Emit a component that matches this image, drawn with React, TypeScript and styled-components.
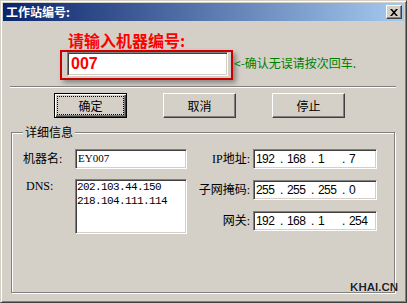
import React from 'react';
import styled, { createGlobalStyle } from 'styled-components';

const GlobalStyle = createGlobalStyle`
  html, body {
    margin: 0;
    padding: 0;
    background: #d4d0c8;
  }
  body {
    font-family: "Noto Sans CJK SC", "Liberation Sans", sans-serif;
    font-size: 12px;
    color: #000;
  }
`;

const Window = styled.div`
  width: 407px;
  height: 303px;
  box-sizing: border-box;
  background: #d4d0c8;
  border: 1px solid;
  border-color: #d4d0c8 #404040 #404040 #d4d0c8;
  box-shadow: inset 1px 1px #fff, inset -1px -1px #808080;
  padding: 2px;
  display: flex;
  flex-direction: column;
`;

const TitleBar = styled.div`
  height: 18px;
  flex: none;
  display: flex;
  align-items: center;
  padding: 0 2px 0 3px;
  background: linear-gradient(to right, #0a246a, #a6caf0);
`;

const Title = styled.span`
  color: #fff;
  font-weight: bold;
  font-size: 12px;
  line-height: 18px;
`;

const CloseButton = styled.div`
  margin-left: auto;
  width: 16px;
  height: 14px;
  box-sizing: border-box;
  background: #d4d0c8;
  border: 1px solid;
  border-color: #fff #404040 #404040 #fff;
  box-shadow: inset -1px -1px #808080;
  display: flex;
  align-items: center;
  justify-content: center;
`;

const Body = styled.div`
  position: relative;
  flex: 1;
  display: flex;
  flex-direction: column;
  align-items: flex-start;
`;

const PromptTitle = styled.div`
  margin: 11px 0 0 65px;
  font-size: 16px;
  line-height: 16px;
  font-weight: bold;
  color: #f00;
`;

const InputRow = styled.div`
  margin: 2px 0 0 57px;
  display: flex;
  align-items: flex-start;
`;

const RedFrame = styled.div`
  width: 173px;
  height: 30px;
  box-sizing: border-box;
  border: 2px solid #c80000;
  padding: 0 3px 0 5px;
  box-shadow: 3px 3px 5px rgba(0, 0, 0, 0.35);
  display: flex;
`;

const Sunken = styled.div<{ $w?: number; $h?: number }>`
  box-sizing: border-box;
  background: #fff;
  border: 1px solid;
  border-color: #808080 #fff #fff #808080;
  box-shadow: inset 1px 1px #404040, inset -1px -1px #d4d0c8;
  width: ${(p) => (p.$w ? `${p.$w}px` : 'auto')};
  height: ${(p) => p.$h ?? 20}px;
  flex: none;
`;

const PrimaryField = styled(Sunken)`
  flex: 1;
  padding-left: 3px;
  font-family: "Liberation Sans", sans-serif;
  font-weight: bold;
  font-size: 16px;
  line-height: 22px;
  color: #f00;
`;

const Hint = styled.div`
  margin: 6px 0 0 1px;
  color: #008000;
  font-size: 12px;
  line-height: 14px;
  white-space: nowrap;
`;

const Separator = styled.div`
  margin: 6px 0 0 7px;
  width: 386px;
  border-top: 1px solid #808080;
  border-bottom: 1px solid #fff;
`;

const ButtonRow = styled.div`
  margin: 5px 0 0 51px;
  display: flex;
  gap: 36px;
`;

const Button = styled.div<{ $default?: boolean }>`
  width: 73px;
  height: 25px;
  box-sizing: border-box;
  background: #d4d0c8;
  display: flex;
  padding: ${(p) => (p.$default ? '2px' : '3px')};
  border: 1px solid;
  border-color: ${(p) => (p.$default ? '#000' : '#fff #404040 #404040 #fff')};
  box-shadow: ${(p) =>
    p.$default
      ? 'inset 1px 1px #fff, inset -1px -1px #404040, inset -2px -2px #808080'
      : 'inset -1px -1px #808080'};
`;

const FocusRing = styled.span<{ $on?: boolean }>`
  flex: 1;
  display: flex;
  align-items: center;
  justify-content: center;
  border: 1px dotted ${(p) => (p.$on ? '#000' : 'transparent')};
  font-size: 12px;
  line-height: 14px;
`;

const GroupBox = styled.div`
  position: relative;
  margin: 14px 0 0 8px;
  width: 384px;
  height: 161px;
  box-sizing: border-box;
  border: 1px solid #808080;
  box-shadow: inset 1px 1px #fff, 1px 1px #fff;
  padding: 16px 0 0 11px;
  display: flex;
  align-items: flex-start;
  gap: 6px;
`;

const Legend = styled.span`
  position: absolute;
  top: -8px;
  left: 11px;
  padding: 0 2px;
  background: #d4d0c8;
  font-size: 12px;
  line-height: 14px;
`;

const Column = styled.div<{ $gap: number }>`
  display: flex;
  flex-direction: column;
  gap: ${(p) => p.$gap}px;
`;

const Row = styled.div<{ $top?: boolean }>`
  display: flex;
  align-items: ${(p) => (p.$top ? 'flex-start' : 'center')};
`;

const Label = styled.span<{ $w: number; $right?: boolean; $pad?: number }>`
  width: ${(p) => p.$w}px;
  box-sizing: border-box;
  padding-left: ${(p) => p.$pad ?? 0}px;
  text-align: ${(p) => (p.$right ? 'right' : 'left')};
  font-family: "Liberation Serif", "Noto Sans CJK SC", serif;
  font-size: 12px;
  line-height: 14px;
  white-space: nowrap;
  flex: none;
`;

const NameField = styled(Sunken)`
  padding-left: 2px;
  font-family: "Liberation Serif", serif;
  font-size: 11px;
  line-height: 17px;
`;

const DnsBox = styled(Sunken)`
  padding: 0 1px;
  font-family: "Liberation Mono", monospace;
  font-size: 11px;
  letter-spacing: -0.6px;
  line-height: 14px;
`;

const IpField = styled(Sunken)`
  margin-left: 3px;
  padding-left: 2px;
  display: flex;
  align-items: center;
  font-family: "Liberation Sans", sans-serif;
  font-size: 12px;
  letter-spacing: -0.6px;
`;

const Octet = styled.span`
  width: 23px;
`;

const Dot = styled.span`
  width: 8px;
  padding-left: 1px;
  box-sizing: border-box;
`;

const Watermark = styled.div`
  position: absolute;
  right: 6px;
  bottom: 7px;
  font-family: "Liberation Sans", sans-serif;
  font-weight: bold;
  font-size: 11.5px;
  line-height: 11px;
  color: #1e1e1e;
  text-shadow: 0 0 1px #fff;
`;

const IpAddress = ({ parts }: { parts: string[] }) => (
  <IpField $w={124}>
    {parts.map((p, i) => (
      <React.Fragment key={i}>
        <Octet>{p}</Octet>
        {i < parts.length - 1 && <Dot>.</Dot>}
      </React.Fragment>
    ))}
  </IpField>
);

const App = () => (
  <>
    <GlobalStyle />
    <Window>
      <TitleBar>
        <Title>工作站编号:</Title>
        <CloseButton>
          <svg width="8" height="7" viewBox="0 0 8 7">
            <path d="M0 0h2l2 2.2L6 0h2L5 3.5 8 7H6L4 4.8 2 7H0l3-3.5z" fill="#000" />
          </svg>
        </CloseButton>
      </TitleBar>
      <Body>
        <PromptTitle>请输入机器编号:</PromptTitle>
        <InputRow>
          <RedFrame>
            <PrimaryField $h={24}>007</PrimaryField>
          </RedFrame>
          <Hint>&lt;-确认无误请按次回车.</Hint>
        </InputRow>
        <Separator />
        <ButtonRow>
          <Button $default>
            <FocusRing $on>确定</FocusRing>
          </Button>
          <Button>
            <FocusRing>取消</FocusRing>
          </Button>
          <Button>
            <FocusRing>停止</FocusRing>
          </Button>
        </ButtonRow>
        <GroupBox>
          <Legend>详细信息</Legend>
          <Column $gap={10}>
            <Row>
              <Label $w={52}>机器名:</Label>
              <NameField $w={112}>EY007</NameField>
            </Row>
            <Row $top>
              <Label $w={52} $pad={3}>DNS:</Label>
              <DnsBox $w={112} $h={55}>
                202.103.44.150
                <br />
                218.104.111.114
              </DnsBox>
            </Row>
          </Column>
          <Column $gap={11}>
            <Row>
              <Label $w={57} $right>IP地址:</Label>
              <IpAddress parts={['192', '168', '1', '7']} />
            </Row>
            <Row>
              <Label $w={57} $right>子网掩码:</Label>
              <IpAddress parts={['255', '255', '255', '0']} />
            </Row>
            <Row>
              <Label $w={57} $right>网关:</Label>
              <IpAddress parts={['192', '168', '1', '254']} />
            </Row>
          </Column>
        </GroupBox>
        <Watermark>KHAI.CN</Watermark>
      </Body>
    </Window>
  </>
);

export default App;
